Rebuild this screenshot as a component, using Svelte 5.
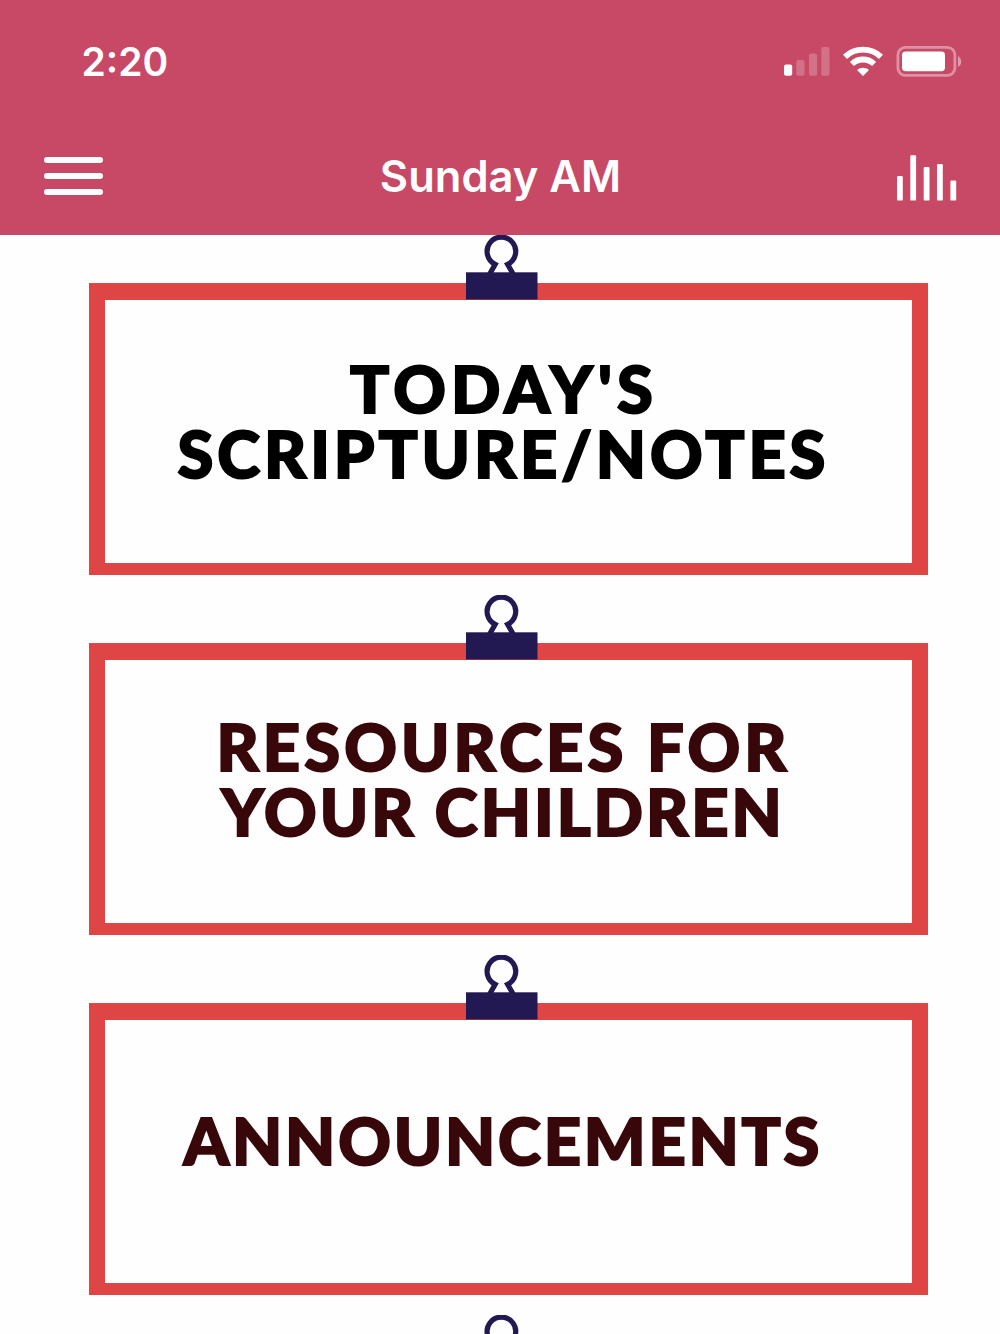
<script lang="ts">
type Line = { text: string; spacing: number };

const cards: { color: string; offset: number; lines: Line[] }[] = [
	{
		color: '#000000',
		offset: 56,
		lines: [
			{ text: "TODAY'S", spacing: 5.2 },
			{ text: 'SCRIPTURE/NOTES', spacing: 3.9 }
		]
	},
	{
		color: '#380709',
		offset: 54,
		lines: [
			{ text: 'RESOURCES FOR', spacing: 4.1 },
			{ text: 'YOUR CHILDREN', spacing: 3 }
		]
	},
	{
		color: '#380709',
		offset: 88,
		lines: [{ text: 'ANNOUNCEMENTS', spacing: 2.8 }]
	}
];
</script>

{#snippet clip()}
	<svg class="clip" width="72" height="65" viewBox="0 0 72 65" aria-hidden="true">
		<path
			d="M23.7 39 L29.2 29.3 A14.3 14.3 0 1 1 41.6 29.3 L47.1 39"
			fill="none"
			stroke="#231952"
			stroke-width="5.2"
		/>
		<rect x="0" y="37.3" width="71.5" height="27.2" fill="#231952" />
	</svg>
{/snippet}

<div class="screen">
	<header>
		<div class="status">
			<span class="time">2:20</span>
			<div class="indicators">
				<svg width="46" height="30" viewBox="0 0 46 30" fill="#fff" aria-hidden="true">
					<rect x="0" y="18.5" width="8.2" height="11.2" rx="2" />
					<g opacity="0.22">
						<rect x="12.3" y="14" width="8.2" height="15.7" rx="2" />
						<rect x="25" y="7.5" width="8.2" height="22.2" rx="2" />
						<rect x="37.3" y="1" width="8.2" height="28.7" rx="2" />
					</g>
				</svg>
				<svg class="wifi" width="40" height="30" viewBox="0 0 40 30" aria-hidden="true">
					<g fill="none" stroke="#fff" stroke-width="5.8">
						<path d="M2 10.8 A26 26 0 0 1 38 10.8" />
						<path d="M8.9 18 A16 16 0 0 1 31.1 18" />
					</g>
					<path d="M14 24 A8.8 8.8 0 0 1 26 24 L20 30 Z" fill="#fff" />
				</svg>
				<svg class="battery" width="66" height="31" viewBox="0 0 66 31" aria-hidden="true">
					<rect x="1.9" y="1.4" width="57" height="28" rx="7.5" fill="none" stroke="#fff" stroke-opacity="0.4" stroke-width="2.8" />
					<rect x="6" y="5.6" width="43" height="19.6" rx="3.6" fill="#fff" />
					<path d="M62 10 Q65.2 12 65.2 15.5 Q65.2 19 62 21 Z" fill="#fff" opacity="0.45" />
				</svg>
			</div>
		</div>
		<nav>
			<button type="button" class="menu" aria-label="menu">
				<span></span>
				<span></span>
				<span></span>
			</button>
			<h1>Sunday AM</h1>
			<button type="button" class="audio" aria-label="audio">
				<svg width="60" height="46" viewBox="0 0 60 46" fill="#fff">
					<rect x="0" y="21" width="5.8" height="24.6" rx="1.2" />
					<rect x="13.3" y="0.2" width="5.8" height="45.4" rx="1.2" />
					<rect x="26.7" y="12" width="5.8" height="33.6" rx="1.2" />
					<rect x="40" y="9" width="5.8" height="36.6" rx="1.2" />
					<rect x="53.4" y="25.5" width="5.8" height="20.1" rx="1.2" />
				</svg>
			</button>
		</nav>
	</header>

	<main>
		{#each cards as card}
			<section class="card" style="color: {card.color}; padding-top: {card.offset}px">
				{@render clip()}
				{#each card.lines as line}
					<div class="line" style="letter-spacing: {line.spacing}px; margin-right: {-line.spacing}px">{line.text}</div>
				{/each}
			</section>
		{/each}
		<!-- top of the next card, cut off by the screen edge -->
		<section class="card">{@render clip()}</section>
	</main>
</div>

<style>
	:global(body) {
		margin: 0;
		background: #fff;
	}
	.screen {
		width: 1000px;
		height: 1334px;
		overflow: hidden;
		background: #fefefe;
		font-family: Inter, 'Liberation Sans', sans-serif;
	}
	header {
		height: 234.5px;
		box-sizing: border-box;
		background: #c74966;
		color: #fff;
	}
	.status {
		display: flex;
		align-items: center;
		justify-content: space-between;
		height: 122px;
		padding: 0 38px 0 81.5px;
	}
	.time {
		font-size: 39px;
		font-weight: 600;
	}
	.indicators {
		display: flex;
		align-items: center;
	}
	.indicators svg {
		display: block;
	}
	.wifi {
		margin-left: 13px;
	}
	.battery {
		margin-left: 13px;
	}
	nav {
		display: grid;
		grid-template-columns: 60px 1fr 60px;
		align-items: center;
		height: 106px;
		padding: 1px 43px 0;
	}
	button {
		padding: 0;
		border: 0;
		background: none;
	}
	.menu {
		display: flex;
		flex-direction: column;
		gap: 10.3px;
		padding-left: 0.5px;
	}
	.menu span {
		width: 59px;
		height: 5.8px;
		border-radius: 3px;
		background: #fff;
	}
	.audio {
		padding-top: 3px;
	}
	.audio svg {
		display: block;
	}
	h1 {
		margin: 0;
		padding-left: 1px;
		font-size: 43.5px;
		font-weight: 600;
		line-height: 106px;
		text-align: center;
	}
	main {
		display: flex;
		flex-direction: column;
		gap: 68px;
		padding: 48px 72px 0 89px;
	}
	.card {
		position: relative;
		box-sizing: border-box;
		height: 292px;
		flex-shrink: 0;
		display: flex;
		flex-direction: column;
		align-items: center;
		border: 16px solid #df4545;
		border-top-width: 17px;
		border-bottom-width: 12px;
		padding-right: 14px;
		font-family: Lato, 'Liberation Sans', sans-serif;
		font-weight: 900;
	}
	.clip {
		position: absolute;
		left: 360.5px;
		top: -65px;
	}
	/* the outline thickens the letters beyond the heaviest weight */
	.line {
		font-size: 65px;
		line-height: 65px;
		white-space: nowrap;
		-webkit-text-stroke: 2px currentColor;
	}
</style>
